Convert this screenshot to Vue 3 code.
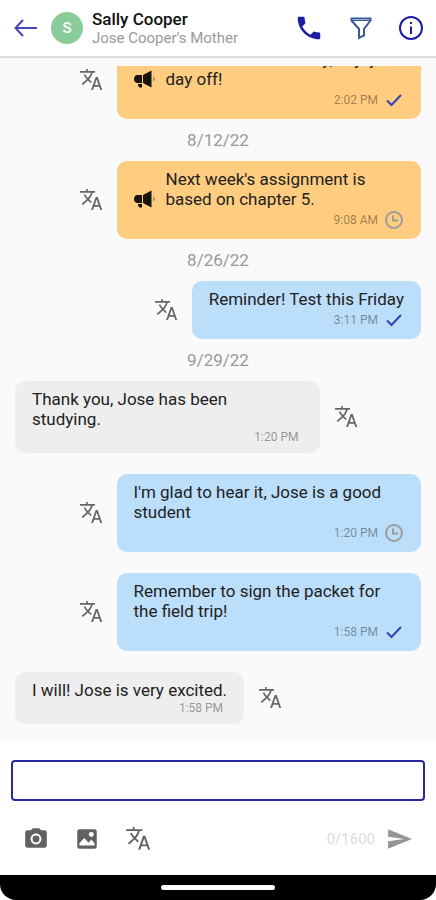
<template>
  <div class="screen">
    <header class="top-bar">
      <button class="icon-button back" aria-label="Back">
        <svg width="24" height="20" viewBox="0 0 24 20" class="line">
          <path d="M23 10H2M9 2L1.500 10l7.500 8" />
        </svg>
      </button>
      <div class="avatar">S</div>
      <div class="contact">
        <h1>Sally Cooper</h1>
        <p>Jose Cooper's Mother</p>
      </div>
      <div class="actions">
        <button class="icon-button" aria-label="Call">
          <svg width="30" height="30" viewBox="0 0 24 24">
            <path
              d="M6.62 10.79c1.44 2.83 3.76 5.14 6.59 6.59l2.2-2.2c.27-.27.67-.36 1.02-.24 1.12.37 2.33.57 3.57.57.55 0 1 .45 1 1V20c0 .55-.45 1-1 1-9.39 0-17-7.61-17-17 0-.55.45-1 1-1h3.5c.55 0 1 .45 1 1 0 1.25.2 2.45.57 3.57.11.35.03.74-.25 1.02l-2.2 2.2z"
            />
          </svg>
        </button>
        <button class="icon-button" aria-label="Filter">
          <svg width="22" height="24" viewBox="0 0 22 24" class="line filter">
            <path d="M1.500 2.500h19v2l-6.500 8.500v6.500l-5 2.500v-9l-7.500-8.500z" />
            <path d="M2 4.500h18" class="thin" />
          </svg>
        </button>
        <button class="icon-button" aria-label="Info">
          <svg width="26" height="26" viewBox="0 0 26 26" class="line">
            <circle cx="13" cy="13" r="11" />
            <path d="M13 11.500v7.500M13 7v2" />
          </svg>
        </button>
      </div>
    </header>

    <main class="chat">
      <div class="messages">
        <template v-for="message in messages" :key="message.id">
          <div v-if="message.date" class="date">{{ message.date }}</div>
          <div class="row" :class="{ received: message.type === 'received' }">
            <button class="icon-button translate" aria-label="Translate">
              <svg width="24" height="24" viewBox="0 0 24 24">
                <path :d="translatePath" />
              </svg>
            </button>
            <div class="bubble" :class="[message.type, { short: message.short }]">
              <div class="body">
                <svg
                  v-if="message.type === 'announcement'"
                  class="megaphone"
                  width="24"
                  height="20"
                  viewBox="0 0 24 20"
                >
                  <path
                    d="M3.500 6H8v8H3.500C1.500 14 0 12.500 0 10s1.500-4 3.500-4zM9 6l8.500-4.500v17L9 14zM4 15h4v3.500H5.500L4 16.500z"
                  />
                  <path d="M19 7.500c2.500 1 2.500 4 0 5z" class="sound" />
                </svg>
                <p>{{ message.text }}</p>
              </div>
              <div class="meta">
                <span>{{ message.time }}</span>
                <svg
                  v-if="message.status === 'sent'"
                  class="check"
                  width="20"
                  height="20"
                  viewBox="0 0 20 20"
                >
                  <path d="M3 10.500l4.500 4.500L17 5" />
                </svg>
                <svg
                  v-if="message.status === 'pending'"
                  class="clock"
                  width="20"
                  height="20"
                  viewBox="0 0 20 20"
                >
                  <circle cx="10" cy="10" r="8" />
                  <path d="M9 5.500v5h5" />
                </svg>
              </div>
            </div>
          </div>
        </template>
      </div>
    </main>

    <footer class="composer">
      <input v-model="draft" type="text" maxlength="1600" aria-label="Message" />
      <div class="tools">
        <button class="icon-button" aria-label="Take photo">
          <svg width="26" height="26" viewBox="0 0 24 24">
            <circle cx="12" cy="12" r="3.200" />
            <path
              d="M9 2L7.170 4H4c-1.100 0-2 .9-2 2v12c0 1.100.9 2 2 2h16c1.100 0 2-.9 2-2V6c0-1.100-.9-2-2-2h-3.170L15 2H9zm3 15c-2.760 0-5-2.240-5-5s2.240-5 5-5 5 2.240 5 5-2.240 5-5 5z"
            />
          </svg>
        </button>
        <button class="icon-button" aria-label="Add picture">
          <svg width="26" height="26" viewBox="0 0 24 24">
            <path
              fill-rule="evenodd"
              d="M5 3h14a2 2 0 0 1 2 2v14a2 2 0 0 1-2 2H5a2 2 0 0 1-2-2V5a2 2 0 0 1 2-2zM5 18h14v-2l-3-3.500-2.500 3L9.500 11 5 16zM16 5.500a2.300 2.300 0 1 0 0 4.600 2.300 2.300 0 0 0 0-4.600z"
            />
          </svg>
        </button>
        <button class="icon-button" aria-label="Translate message">
          <svg width="26" height="26" viewBox="0 0 24 24">
            <path :d="translatePath" />
          </svg>
        </button>
        <span class="counter">{{ draft.length }}/1600</span>
        <button class="icon-button send" aria-label="Send">
          <svg width="26" height="26" viewBox="0 0 24 24">
            <path d="M1 21l22-9L1 3v7l15 2-15 2z" />
          </svg>
        </button>
      </div>
    </footer>

    <div class="nav-bar">
      <div class="handle"></div>
    </div>
  </div>
</template>

<script setup>
import { ref } from "vue";

const draft = ref("");

const translatePath =
  "M1 3h6.200V1h1.600v2H16v1.700h-2.300c-.7 2.500-1.900 4.700-3.600 6.600l2.500 2.400-.7 1.600-3-2.900-5 4.600-1.200-1.200 5-4.600C6.300 9.700 5.300 8.200 4.600 6.500h1.800c.6 1.300 1.400 2.400 2.400 3.500 1.500-1.600 2.500-3.300 3.100-5.300H1zM16.700 9h2l4.500 13h-1.900l-1.100-3.300h-5L14 22h-1.900zM15.800 17h3.800l-1.900-5.400z";

const messages = [
  {
    id: 1,
    type: "announcement",
    text: "No school on Monday, enjoy the day off!",
    time: "2:02 PM",
    status: "sent",
  },
  {
    id: 2,
    date: "8/12/22",
    type: "announcement",
    text: "Next week's assignment is based on chapter 5.",
    time: "9:08 AM",
    status: "pending",
  },
  {
    id: 3,
    date: "8/26/22",
    type: "sent",
    short: true,
    text: "Reminder! Test this Friday",
    time: "3:11 PM",
    status: "sent",
  },
  {
    id: 4,
    date: "9/29/22",
    type: "received",
    text: "Thank you, Jose has been studying.",
    time: "1:20 PM",
  },
  {
    id: 5,
    type: "sent",
    text: "I'm glad to hear it, Jose is a good student",
    time: "1:20 PM",
    status: "pending",
  },
  {
    id: 6,
    type: "sent",
    text: "Remember to sign the packet for the field trip!",
    time: "1:58 PM",
    status: "sent",
  },
  {
    id: 7,
    type: "received",
    short: true,
    text: "I will! Jose is very excited.",
    time: "1:58 PM",
  },
];
</script>

<style>
body {
  margin: 0;
  background: #fff;
}
</style>

<style scoped>
.screen {
  display: flex;
  flex-direction: column;
  height: 100vh;
  background: #fff;
  font-family: Roboto, "Liberation Sans", sans-serif;
  color: #222;
}

h1,
p {
  margin: 0;
}

svg {
  display: block;
  fill: currentColor;
}

.icon-button {
  display: block;
  flex: none;
  padding: 0;
  border: 0;
  background: none;
  color: inherit;
}

.line {
  fill: none;
  stroke: currentColor;
  stroke-width: 2;
}

.top-bar {
  display: flex;
  align-items: center;
  flex: none;
  height: 56px;
  padding: 0 12px 0 14px;
  border-bottom: 2px solid #dedede;
  color: #1c1fa5;
}

.back {
  color: #4646b4;
}

.avatar {
  flex: none;
  width: 32px;
  margin-left: 13px;
  border-radius: 50%;
  background: #88cc9b;
  color: #fff;
  font-size: 15px;
  font-weight: 500;
  line-height: 32px;
  text-align: center;
}

.contact {
  flex: 1;
  min-width: 0;
  margin-left: 9px;
  white-space: nowrap;
}

.contact h1 {
  color: #111;
  font-size: 17px;
  font-weight: 500;
  line-height: 19px;
}

.contact p {
  color: #9a9a9a;
  font-size: 15px;
  line-height: 18px;
}

.actions {
  display: flex;
  align-items: center;
  gap: 26px;
}

.filter {
  color: #345a94;
}

.thin {
  stroke-width: 1;
}

.chat {
  display: flex;
  flex: 1;
  min-height: 0;
  padding-top: 8px;
  background: #fafafa;
}

.messages {
  display: flex;
  flex: 1;
  flex-direction: column;
  justify-content: flex-end;
  overflow: hidden;
  padding: 0 15px 16px;
}

.date {
  flex: none;
  color: #999;
  font-size: 17px;
  line-height: 42px;
  text-align: center;
}

.row {
  display: flex;
  flex: none;
  align-items: center;
  justify-content: flex-end;
  gap: 14px;
}

.row + .row {
  margin-top: 21px;
}

.row.received {
  flex-direction: row-reverse;
}

.translate {
  color: #666;
}

.bubble {
  box-sizing: border-box;
  width: 75%;
  padding: 8px 17px;
  border-radius: 10px;
  background: #bbdefb;
}

.bubble.announcement {
  background: #ffcc80;
}

.bubble.received {
  background: #eee;
}

.bubble.short {
  width: auto;
}

.body {
  display: flex;
  gap: 8px;
  font-size: 17px;
  line-height: 20px;
}

.body p {
  max-width: 260px;
}

.announcement .body {
  margin-right: -8px;
}

.megaphone {
  flex: none;
  align-self: flex-end;
  color: #17130d;
}

.sound {
  fill: #b78a4c;
}

.meta {
  display: flex;
  align-items: center;
  justify-content: flex-end;
  gap: 6px;
  height: 22px;
  color: rgba(0, 0, 0, 0.4);
  font-size: 12px;
}

.received .meta {
  height: 16px;
  padding-right: 4px;
}

.check {
  fill: none;
  stroke: #3343b5;
  stroke-width: 2;
}

.clock {
  fill: none;
  stroke: #9c9c9c;
  stroke-width: 2;
}

.composer {
  flex: none;
  padding: 20px 11px 23px;
}

.composer input {
  display: block;
  box-sizing: border-box;
  width: 100%;
  height: 41px;
  padding: 0 12px;
  border: 2px solid #2828a0;
  border-radius: 4px;
  outline: none;
  background: #fff;
  color: #222;
  font: inherit;
}

.tools {
  display: flex;
  align-items: center;
  gap: 25px;
  margin-top: 25px;
  padding: 0 12px;
  color: #616161;
}

.counter {
  margin-left: auto;
  color: #ddd;
  font-size: 15px;
}

.send {
  margin-left: -13px;
  color: #959595;
}

.nav-bar {
  display: flex;
  align-items: center;
  justify-content: center;
  flex: none;
  height: 25px;
  border-radius: 0 0 16px 16px;
  background: #000;
}

.handle {
  width: 26%;
  height: 5px;
  border-radius: 3px;
  background: #fff;
}
</style>
